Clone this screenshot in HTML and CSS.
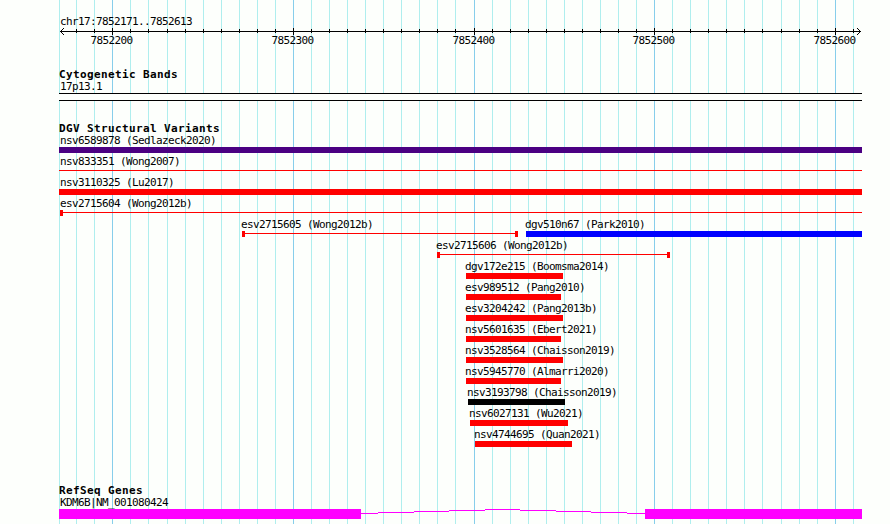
FILE: index.html
```
<!DOCTYPE html>
<html lang="en">
<head>
    <meta charset="UTF-8">
    <title>chr17:7852171..7852613</title>
    <link rel="stylesheet" href="styles.css">
</head>
<body>
    <div class="browser">
        <svg class="gridlines" id="gridlines" width="890" height="524" shape-rendering="crispEdges"></svg>

        <section class="ruler">
            <div class="label">chr17:7852171..7852613</div>
            <svg class="axis" id="axis" width="803" height="30" shape-rendering="crispEdges">
                <path d="M1 4.5H802M4.5 1v1M3.5 2v1M2.5 3v1M2.5 5v1M3.5 6v1M4.5 7v1M798.5 1v1M799.5 2v1M800.5 3v1M800.5 5v1M799.5 6v1M798.5 7v1"/>
            </svg>
        </section>

        <section class="track cyto">
            <h2>Cytogenetic Bands</h2>
            <div class="label">17p13.1</div>
            <div class="band"></div>
        </section>

        <section class="track variants">
            <h2>DGV Structural Variants</h2>
            <div id="variants"></div>
        </section>

        <section class="track genes">
            <h2>RefSeq Genes</h2>
            <div class="label">KDM6B|NM_001080424</div>
            <div class="gene">
                <div class="exon first"></div>
                <svg class="intron" width="284" height="10" shape-rendering="crispEdges">
                    <path d="M0 4.5H17M17 3.5H53M53 2.5H88M88 1.5H124M124 .5H159M159 1.5H195M195 2.5H230M230 3.5H266M266 4.5H284"/>
                </svg>
                <div class="exon last"></div>
            </div>
        </section>
    </div>

    <script>
        const LEFT = 59;
        const grid = [59, 76, 94, 112, 130, 148, 167, 185, 203, 221, 239, 257, 275, 293, 311, 329,
            347, 365, 383, 401, 419, 437, 455, 474, 492, 510, 528, 546, 564, 582, 600, 618, 636,
            654, 672, 690, 708, 726, 744, 762, 781, 799, 817, 835, 853];
        const major = { 112: '7852200', 293: '7852300', 474: '7852400', 654: '7852500', 835: '7852600' };

        let lines = '';
        let ticks = '';
        grid.forEach(x => {
            const isMajor = x in major;
            lines += `<rect class="${isMajor ? 'major' : 'minor'}" x="${x}" y="0" width="1" height="524"/>`;
            if (x === LEFT) return;
            const tx = x - LEFT;
            ticks += isMajor
                ? `<rect x="${tx}" y="1" width="1" height="7"/><text x="${tx - 21.5}" y="17">${major[x]}</text>`
                : `<rect x="${tx}" y="2" width="1" height="4"/>`;
        });
        document.getElementById('gridlines').innerHTML = lines;
        document.getElementById('axis').innerHTML += ticks;

        // each row: [name, start, end, glyph]
        const rows = [
            [['nsv6589878 (Sedlazeck2020)', 59, 862, 'inversion']],
            [['nsv833351 (Wong2007)', 59, 862, 'thin']],
            [['nsv3110325 (Lu2017)', 59, 862, 'loss']],
            [['esv2715604 (Wong2012b)', 60, 862, 'thin cap-left']],
            [['esv2715605 (Wong2012b)', 242, 518, 'thin cap-left cap-right'], ['dgv510n67 (Park2010)', 526, 862, 'gain']],
            [['esv2715606 (Wong2012b)', 437, 670, 'thin cap-left cap-right']],
            [['dgv172e215 (Boomsma2014)', 466, 563, 'loss']],
            [['esv989512 (Pang2010)', 466, 561, 'loss']],
            [['esv3204242 (Pang2013b)', 466, 563, 'loss']],
            [['nsv5601635 (Ebert2021)', 466, 561, 'loss']],
            [['nsv3528564 (Chaisson2019)', 466, 563, 'loss']],
            [['nsv5945770 (Almarri2020)', 466, 561, 'loss']],
            [['nsv3193798 (Chaisson2019)', 468, 565, 'other']],
            [['nsv6027131 (Wu2021)', 470, 568, 'loss']],
            [['nsv4744695 (Quan2021)', 475, 572, 'loss']]
        ];
        document.getElementById('variants').innerHTML = rows.map(row =>
            '<div class="row">' + row.map(([name, start, end, glyph]) => `
                <div class="feature" style="margin-left: ${start - LEFT}px; width: ${end - start}px">
                    <div class="label" style="text-indent: ${start < 100 ? 60 - start : -1}px">${name}</div>
                    <div class="glyph ${glyph}"></div>
                </div>`).join('') + '</div>'
        ).join('');
    </script>
</body>
</html>
```
FILE: styles.css
```
body {
    margin: 0;
    background: #fdfffc;
    color: #000;
    overflow: hidden;
}
.browser {
    position: relative;
    box-sizing: border-box;
    width: 890px;
    height: 524px;
    padding: 15px 28px 0 59px;
    font-family: "DejaVu Sans Mono", monospace;
    font-size: 11px;
    line-height: 14px;
}
.gridlines {
    position: absolute;
    top: 0;
    left: 0;
    z-index: -1;
}
.minor {
    fill: #afeeee;
}
.major {
    fill: #87ceeb;
}
.label {
    position: relative;
    z-index: 1;
    height: 12px;
    text-indent: 1px;
    letter-spacing: -0.622px;
    white-space: nowrap;
}
h2 {
    margin: 0;
    height: 12px;
    font-size: 11px;
    font-weight: bold;
    letter-spacing: 0.378px;
    white-space: nowrap;
}
.ruler {
    height: 53px;
}
.axis {
    display: block;
    overflow: visible;
}
.axis path {
    stroke: #000;
    fill: none;
}
.axis text {
    letter-spacing: -0.622px;
}

/* tracks */
.cyto {
    height: 54px;
}
.variants {
    height: 362px;
}
.band {
    box-sizing: border-box;
    height: 8px;
    margin-top: 1px;
    border-top: 1px solid #000;
    border-bottom: 1px solid #000;
    background: #fdfffc;
}
.row {
    display: grid;
    height: 21px;
}
.feature {
    grid-area: 1 / 1;
}
.glyph {
    height: 6px;
    margin-top: 1px;
}
.loss {
    background: #f00;
}
.gain {
    background: #00f;
}
.inversion {
    background: #4b0082;
}
.other {
    background: #000;
}
.thin {
    display: flex;
    justify-content: space-between;
    background: linear-gradient(#f00, #f00) 0 2px / 100% 1px no-repeat;
}
.cap-left::before,
.cap-right::after {
    content: "";
    width: 3px;
    height: 6px;
    background: #f00;
}

/* gene model */
.gene {
    display: flex;
    height: 10px;
    margin-top: 1px;
}
.exon {
    background: #f0f;
}
.exon.first {
    width: 302px;
}
.exon.last {
    width: 217px;
}
.intron path {
    stroke: #f0f;
    fill: none;
}
```
